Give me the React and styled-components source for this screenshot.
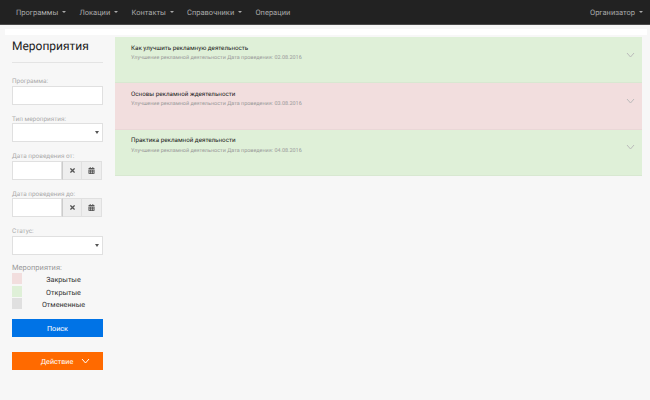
import React from 'react'
import styled, { createGlobalStyle } from 'styled-components'
import { FaTimes, FaCalendarAlt } from 'react-icons/fa'

const Global = createGlobalStyle`
  html, body { margin: 0; padding: 0; background: #f7f7f7; }
  body {
    width: 650px;
    height: 400px;
    overflow: hidden;
    font-family: Roboto, "Open Sans", sans-serif;
    text-rendering: geometricPrecision;
  }
`

const Navbar = styled.nav`
  height: 24px;
  background: #222;
  border-bottom: 1px solid #4a4a4a;
  display: flex;
  align-items: center;
  justify-content: space-between;
  padding: 0 7px 0 16px;
`

const NavList = styled.div`
  display: flex;
  gap: 13.2px;
`

const NavItem = styled.span`
  font-size: 7.5px;
  color: #aaa;
  display: flex;
  align-items: center;
  gap: 4px;
  white-space: nowrap;
`

const Caret = styled.i`
  width: 0;
  height: 0;
  border-left: 2px solid transparent;
  border-right: 2px solid transparent;
  border-top: 2px solid currentColor;
`

const Strip = styled.div`
  height: 6px;
  margin: 4px 3px 0 5px;
  background: #fff;
`

const Page = styled.div`
  display: flex;
  align-items: flex-start;
  margin-top: 2px;
`

const Sidebar = styled.aside`
  width: 91px;
  margin-left: 12px;
  flex: none;
`

const Title = styled.h1`
  margin: 2px 0 0;
  font-size: 12px;
  line-height: 14px;
  font-weight: 400;
  color: #222;
  padding-bottom: 9px;
  border-bottom: 1px solid #e4e4e4;
`

const Label = styled.div`
  margin-top: ${p => p.$top || 10}px;
  font-size: 6.4px;
  line-height: 9px;
  color: #aaa;
`

const Input = styled.div`
  box-sizing: border-box;
  height: 19px;
  margin-top: -0.5px;
  background: #fff;
  border: 1px solid #e0e0e0;
  position: relative;
  width: ${p => p.$w || '91px'};
`

const Arrow = styled.i`
  position: absolute;
  right: 3px;
  top: 7px;
  border-left: 2px solid transparent;
  border-right: 2px solid transparent;
  border-top: 3px solid #555;
`

const DateRow = styled.div`
  display: flex;
  margin-top: -0.5px;
  width: 90px;
`

const DateInput = styled(Input)`
  margin-top: 0;
  flex: none;
`

const AddOn = styled.div`
  box-sizing: border-box;
  width: 20px;
  height: 19px;
  background: #eee;
  border: 1px solid #e0e0e0;
  border-left: ${p => (p.$first ? '1px solid #ccc' : 'none')};
  display: flex;
  align-items: center;
  justify-content: center;
  color: #555;
  font-size: 7px;
`

const LegendTitle = styled.div`
  margin-top: 8px;
  font-size: 7.5px;
  line-height: 10px;
  color: #999;
`

const LegendRow = styled.div`
  display: flex;
  align-items: center;
  height: 12.5px;
`

const Swatch = styled.i`
  width: 10px;
  height: 11px;
  flex: none;
  background: ${p => p.$color};
`

const LegendText = styled.span`
  width: 81px;
  padding: 2px 0 0 2px;
  box-sizing: border-box;
  text-align: center;
  font-size: 7.2px;
  color: #333;
`

const Button = styled.div`
  height: 18px;
  margin-top: ${p => p.$top}px;
  background: ${p => p.$color};
  color: #fff;
  font-size: 7.2px;
  display: flex;
  align-items: center;
  justify-content: center;
  gap: 8px;
  padding: 1px 0 0 ${p => p.$pad || 0}px;
  box-sizing: border-box;
`

const List = styled.main`
  width: 527px;
  margin-left: 12px;
  flex: none;
`

const Item = styled.section`
  box-sizing: border-box;
  height: 46.4px;
  background: ${p => (p.$closed ? '#f2dede' : '#dff0d8')};
  border-bottom: 1px solid rgba(0, 0, 0, 0.03);
  padding: 6.5px 7px 0 16px;
  display: flex;
  justify-content: space-between;
  align-items: flex-start;
`

const ItemTitle = styled.div`
  font-size: 6.25px;
  line-height: 9px;
  color: #222;
`

const ItemMeta = styled.div`
  font-size: 5.45px;
  line-height: 9px;
  margin-top: 1.5px;
  color: #999;
`

const Chevron = styled.svg`
  width: 9px;
  height: 6px;
  margin-top: ${p => p.$top || 0}px;
  fill: none;
  stroke: ${p => p.$color || '#bbb'};
  stroke-width: 1;
`

const items = [
  { title: 'Как улучшить рекламную деятельность', date: '02.08.2016' },
  { title: 'Основы рекламной ждеятельности', date: '03.08.2016', closed: true },
  { title: 'Практика рекламной деятельности', date: '04.08.2016' },
]

export default function App() {
  return (
    <>
      <Global />
      <Navbar>
        <NavList>
          <NavItem>Программы <Caret /></NavItem>
          <NavItem>Локации <Caret /></NavItem>
          <NavItem>Контакты <Caret /></NavItem>
          <NavItem>Справочники <Caret /></NavItem>
          <NavItem>Операции</NavItem>
        </NavList>
        <NavItem>Организатор <Caret /></NavItem>
      </Navbar>
      <Strip />
      <Page>
        <Sidebar>
          <Title>Мероприятия</Title>
          <Label $top={14}>Программа:</Label>
          <Input />
          <Label>Тип мероприятия:</Label>
          <Input><Arrow /></Input>
          <Label>Дата проведения от:</Label>
          <DateRow>
            <DateInput $w="50px" />
            <AddOn $first><FaTimes /></AddOn>
            <AddOn><FaCalendarAlt /></AddOn>
          </DateRow>
          <Label>Дата проведения до:</Label>
          <DateRow>
            <DateInput $w="50px" />
            <AddOn $first><FaTimes /></AddOn>
            <AddOn><FaCalendarAlt /></AddOn>
          </DateRow>
          <Label>Статус:</Label>
          <Input><Arrow /></Input>
          <LegendTitle>Мероприятия:</LegendTitle>
          <LegendRow><Swatch $color="#f2dede" /><LegendText>Закрытые</LegendText></LegendRow>
          <LegendRow><Swatch $color="#dff0d8" /><LegendText>Открытые</LegendText></LegendRow>
          <LegendRow><Swatch $color="#e0e0e0" /><LegendText>Отмененные</LegendText></LegendRow>
          <Button $top={8.5} $color="#0073e6">Поиск</Button>
          <Button $top={15} $color="#ff6a00" $pad={16}>
            Действие
            <Chevron viewBox="0 0 9 6" $color="#fff"><path d="M1 1l3.5 4L8 1" /></Chevron>
          </Button>
        </Sidebar>
        <List>
          {items.map(it => (
            <Item key={it.date} $closed={it.closed}>
              <div>
                <ItemTitle>{it.title}</ItemTitle>
                <ItemMeta>Улучшение рекламной деятельности Дата проведения: {it.date}</ItemMeta>
              </div>
              <Chevron viewBox="0 0 9 6" $top={8}><path d="M1 1l3.5 4L8 1" /></Chevron>
            </Item>
          ))}
        </List>
      </Page>
    </>
  )
}
